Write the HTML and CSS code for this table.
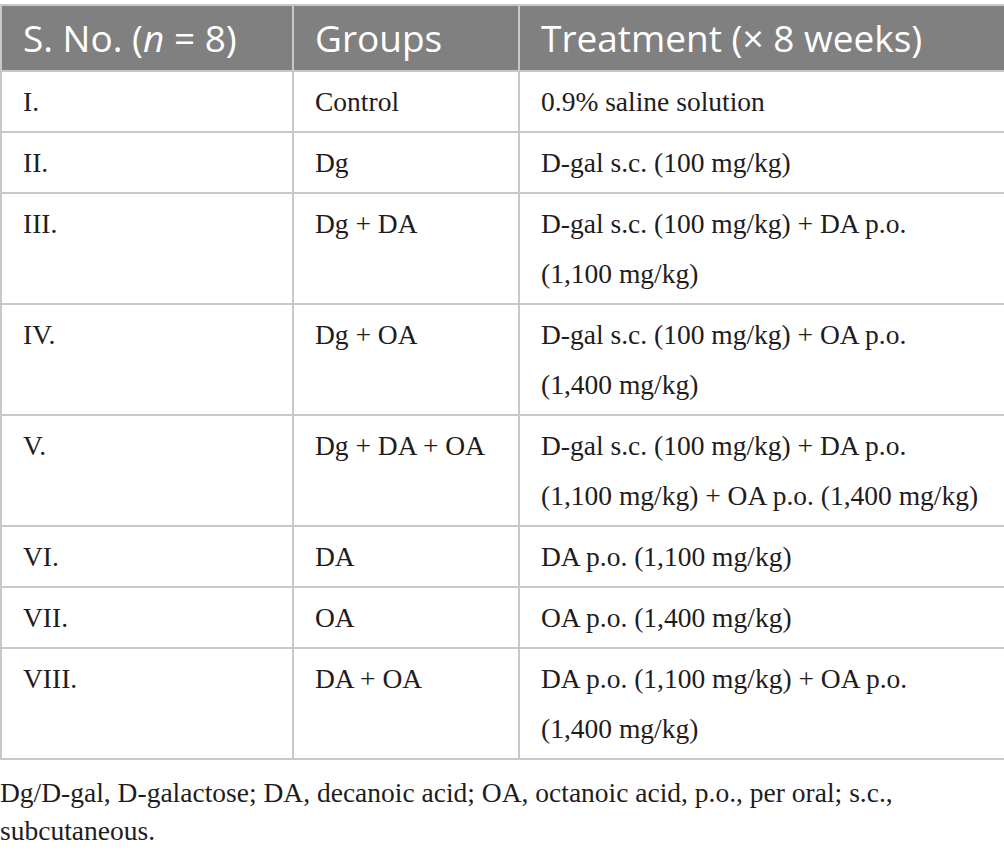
FILE: index.html
```html
<!DOCTYPE html>
<html lang="en">
<head>
<meta charset="utf-8">
<title>Treatment groups</title>
<link rel="stylesheet" href="styles.css">
</head>
<body>
<table class="groups">
  <colgroup>
    <col class="c-no">
    <col class="c-group">
    <col class="c-treat">
  </colgroup>
  <thead>
    <tr>
      <th>S. No. (<i>n</i> = 8)</th>
      <th>Groups</th>
      <th>Treatment (× 8 weeks)</th>
    </tr>
  </thead>
  <tbody>
    <tr>
      <td>I.</td>
      <td>Control</td>
      <td>0.9% saline solution</td>
    </tr>
    <tr>
      <td>II.</td>
      <td>Dg</td>
      <td>D-gal s.c. (100 mg/kg)</td>
    </tr>
    <tr>
      <td>III.</td>
      <td>Dg + DA</td>
      <td>D-gal s.c. (100 mg/kg) + DA p.o.<br>(1,100 mg/kg)</td>
    </tr>
    <tr>
      <td>IV.</td>
      <td>Dg + OA</td>
      <td>D-gal s.c. (100 mg/kg) + OA p.o.<br>(1,400 mg/kg)</td>
    </tr>
    <tr>
      <td>V.</td>
      <td>Dg + DA + OA</td>
      <td>D-gal s.c. (100 mg/kg) + DA p.o.<br>(1,100 mg/kg) + OA p.o. (1,400 mg/kg)</td>
    </tr>
    <tr>
      <td>VI.</td>
      <td>DA</td>
      <td>DA p.o. (1,100 mg/kg)</td>
    </tr>
    <tr>
      <td>VII.</td>
      <td>OA</td>
      <td>OA p.o. (1,400 mg/kg)</td>
    </tr>
    <tr>
      <td>VIII.</td>
      <td>DA + OA</td>
      <td>DA p.o. (1,100 mg/kg) + OA p.o.<br>(1,400 mg/kg)</td>
    </tr>
  </tbody>
</table>
<p class="note">Dg/D-gal, D-galactose; DA, decanoic acid; OA, octanoic acid, p.o., per oral; s.c., subcutaneous.</p>
</body>
</html>
```

FILE: styles.css
```css
html, body {
  margin: 0;
  padding: 0;
  background: #ffffff;
}

body {
  padding-top: 4px;
  font-family: "Liberation Serif", "Times New Roman", serif;
  color: #1f1c1d;
}

.groups {
  width: 1004px;
  border-collapse: collapse;
  table-layout: fixed;
}

.c-no { width: 292px; }
.c-group { width: 226px; }
.c-treat { width: 486px; }

.groups th,
.groups td {
  border: 2px solid #c8c8c8;
  text-align: left;
}

.groups th {
  height: 64px;
  padding: 0 8px 0 21px;
  background: #808080;
  color: #ffffff;
  font-family: "Open Sans", "Noto Sans", sans-serif;
  font-weight: 400;
  font-size: 37px;
  line-height: 40px;
  vertical-align: middle;
  white-space: nowrap;
}

.groups th i {
  font-style: italic;
}

.groups td {
  padding: 5px 8px 4px 21px;
  font-size: 27.5px;
  line-height: 50px;
  vertical-align: top;
  white-space: nowrap;
}

.note {
  margin: 14px 0 0;
  font-size: 27.5px;
  line-height: 38px;
  color: #1f1c1d;
}
```
